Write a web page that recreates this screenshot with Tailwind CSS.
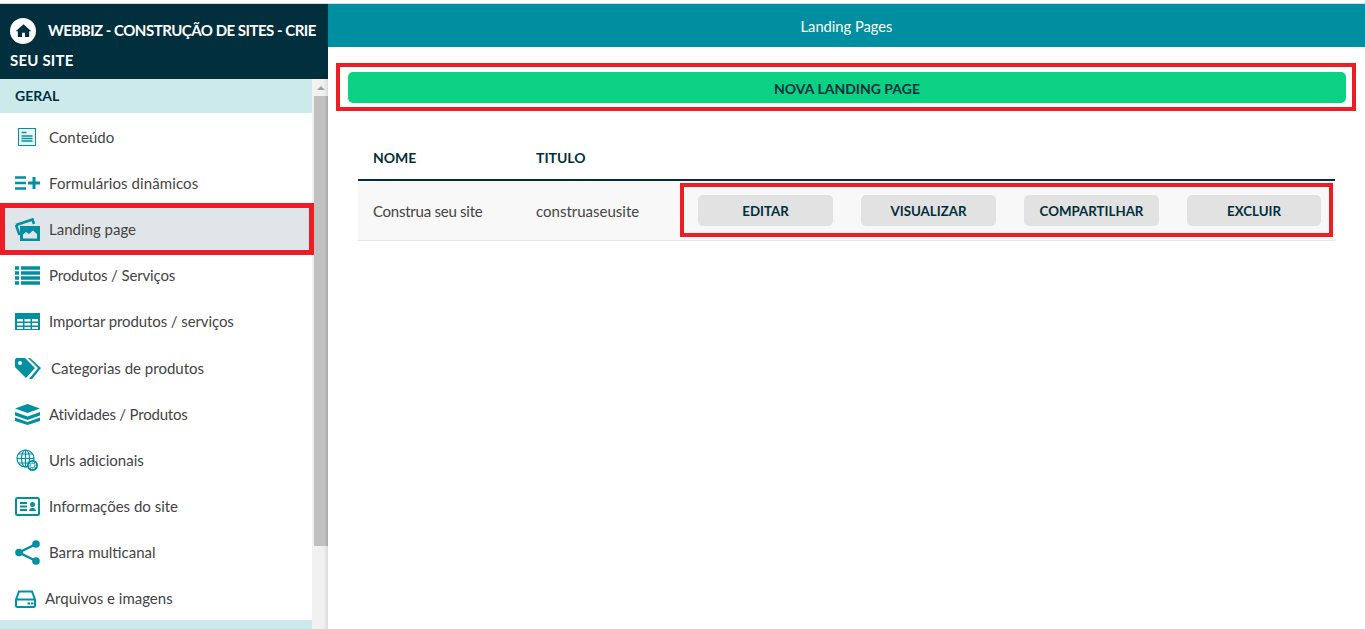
<!DOCTYPE html>
<html lang="en">

<head>
    <meta charset="UTF-8" />
    <meta name="viewport" content="width=device-width, initial-scale=1.0" />
    <script src="https://cdn.jsdelivr.net/npm/@tailwindcss/browser@4"></script>
    <title>Landing Pages</title>
</head>

<body class="h-[629px] overflow-hidden bg-white font-['Lato','Noto_Sans',sans-serif] text-[15px] text-[#444]">
    <div class="h-[4px] bg-white border-b border-[#d9dcde]"></div>
    <div class="flex h-[625px]">
        <aside class="w-[328px] shrink-0 flex flex-col">
            <div class="h-[75px] bg-[#022f3d] text-white font-bold text-[15px] leading-[30px] pl-[10px] pt-[11px]">
                <span class="tracking-[-0.5px]"><span class="inline-flex items-center justify-center w-[26px] h-[26px] rounded-full bg-white align-middle mr-[12px] -mt-[3px]">
                    <svg class="w-[17px] h-[17px] fill-[#022f3d]" viewBox="0 0 24 24"><path d="M12 3 1 13h3v8h6v-6h4v6h6v-8h3z" /></svg>
                </span>WEBBIZ - CONSTRUÇÃO DE SITES - CRIE</span><br><span class="tracking-[0.2px]">SEU SITE</span>
            </div>
            <div class="flex flex-1 min-h-0">
                <nav class="w-[312px] shrink-0 overflow-hidden">
                    <div class="h-[34px] bg-[#cceaec] pl-[15px] pb-[2px] flex items-center font-bold text-[14px] text-[#022f3d]">GERAL</div>
                    <ul class="pt-[1px]">
                        <li class="h-[46px] flex items-center pl-[18px] gap-[13px]">
                            <svg class="w-[18px] h-[18px]" viewBox="0 0 18 18"><rect x="0.5" y="0.5" width="17" height="17" fill="#eef7f8" stroke="#0090a3" /><path d="M3.500 4.500h5M3.500 8h11M3.500 10.500h11M3.500 13h11" stroke="#0090a3" stroke-width="1.300" /></svg>
                            <span>Conteúdo</span>
                        </li>
                        <li class="h-[46px] flex items-center pl-[15px] gap-[9px]">
                            <svg class="w-[25px] h-[14px]" viewBox="0 0 25 14"><path d="M0 1.500h11M0 7h11M0 12.500h11" stroke="#0090a3" stroke-width="2.600" /><path d="M19 1v12M13 7h12" stroke="#0090a3" stroke-width="3" /></svg>
                            <span class="tracking-[0.1px]">Formulários dinâmicos</span>
                        </li>
                        <li class="h-[46px] flex items-center pl-[15px] gap-[9px] bg-[#e0e5e9]">
                            <svg class="w-[25px] h-[23px]" viewBox="0 0 25 23"><path d="M1 7 17.500 1.500 19 6M1 7l3.500 10" fill="none" stroke="#0090a3" stroke-width="2.600" /><rect x="5" y="8" width="20" height="15" fill="#0090a3" /><path d="M8 20.500v-4l3-2.500 3 2 4-3.500 4 3.500v4.500z" fill="#e0e5e9" /></svg>
                            <span>Landing page</span>
                        </li>
                        <li class="h-[46px] flex items-center pl-[15px] gap-[9px]">
                            <svg class="w-[25px] h-[19px]" viewBox="0 0 25 19"><path d="M0 2h4M6 2h19M0 7h4M6 7h19M0 12h4M6 12h19M0 17h4M6 17h19" stroke="#0090a3" stroke-width="3.400" /></svg>
                            <span class="tracking-[-0.15px]">Produtos / Serviços</span>
                        </li>
                        <li class="h-[46px] flex items-center pl-[15px] gap-[9px]">
                            <svg class="w-[25px] h-[17px]" viewBox="0 0 25 17"><rect width="25" height="17" fill="#0090a3" /><path d="M2 6h6v2.500H2zM9.500 6h6v2.500h-6zM17 6h6v2.500h-6zM2 10h6v2.500H2zM9.500 10h6v2.500h-6zM17 10h6v2.500h-6zM2 14h6v2H2zM9.500 14h6v2h-6zM17 14h6v2h-6z" fill="#fff" /></svg>
                            <span class="tracking-[-0.1px]">Importar produtos / serviços</span>
                        </li>
                        <li class="h-[47px] flex items-center pl-[15px] gap-[10px] pt-[1px]">
                            <svg class="w-[26px] h-[21px]" viewBox="0 0 26 21"><path d="M0 1.500 1.500 0H10l10 10-9 10L0 9zM5 3a2 2 0 1 0 0 4 2 2 0 0 0 0-4z" fill="#0090a3" fill-rule="evenodd" /><path d="M13 0h2l11 10-9 11h-3l9-11z" fill="#0090a3" /></svg>
                            <span>Categorias de produtos</span>
                        </li>
                        <li class="h-[46px] flex items-center pl-[15px] gap-[9px]">
                            <svg class="w-[25px] h-[21px]" viewBox="0 0 25 21"><path d="M12.500 0 25 4.500 12.500 9 0 4.500zM0 8l12.500 4.500L25 8v3.500L12.500 16 0 11.500zM0 13.500 12.500 18 25 13.500V17l-12.500 4L0 17z" fill="#0090a3" /></svg>
                            <span class="tracking-[-0.2px]">Atividades / Produtos</span>
                        </li>
                        <li class="h-[46px] flex items-center pl-[16px] gap-[11px]">
                            <svg class="w-[22px] h-[22px]" viewBox="0 0 22 22"><g fill="none" stroke="#0090a3" stroke-width="1.200"><circle cx="9.500" cy="9.500" r="8.500" /><ellipse cx="9.500" cy="9.500" rx="4" ry="8.500" /><path d="M9.500 1v17M1 9.500h17M2.500 5h14M2.500 14h14" /></g><circle cx="16.500" cy="16.500" r="5.500" fill="#0090a3" /><circle cx="16.500" cy="16.500" r="3" fill="none" stroke="#fff" stroke-width="1.400" stroke-dasharray="1.500 0.800" /><circle cx="16.500" cy="16.500" r="1.800" fill="#fff" /></svg>
                            <span>Urls adicionais</span>
                        </li>
                        <li class="h-[46px] flex items-center pl-[15px] gap-[9px]">
                            <svg class="w-[25px] h-[19px]" viewBox="0 0 25 19"><rect x="1" y="1" width="23" height="17" rx="1.500" fill="#fff" stroke="#0090a3" stroke-width="2" /><path d="M5 6h7M5 9.500h7M5 13h7" stroke="#0090a3" stroke-width="1.800" /><circle cx="17.500" cy="7.500" r="2.500" fill="#0090a3" /><path d="M14 14c0-2 2-3 3.500-3s3.500 1 3.500 3z" fill="#0090a3" /></svg>
                            <span>Informações do site</span>
                        </li>
                        <li class="h-[46px] flex items-center pl-[15px] gap-[9px]">
                            <svg class="w-[25px] h-[25px]" viewBox="0 0 25 25"><path d="M21 4 4 12.500 21 21" fill="none" stroke="#0090a3" stroke-width="2.400" /><circle cx="21" cy="4" r="3.800" fill="#0090a3" /><circle cx="4" cy="12.500" r="3.800" fill="#0090a3" /><circle cx="21" cy="21" r="3.800" fill="#0090a3" /></svg>
                            <span>Barra multicanal</span>
                        </li>
                        <li class="h-[45px] flex items-center pl-[15px] gap-[9px] pt-[2px]">
                            <svg class="w-[21px] h-[18px]" viewBox="0 0 21 18"><path d="M1 9.500 4 1.500h13L20 9.500v6a1.500 1.500 0 0 1-1.500 1.500h-16A1.500 1.500 0 0 1 1 15.500zM1 9.500h19" fill="none" stroke="#0090a3" stroke-width="2" /><path d="M12.500 13.500h2.500M16 13.500h2.500" stroke="#0090a3" stroke-width="1.800" /></svg>
                            <span>Arquivos e imagens</span>
                        </li>
                    </ul>
                    <div class="h-[34px] bg-[#cceaec]"></div>
                </nav>
                <div class="w-[16px] shrink-0 bg-[#f1f1f1] flex flex-col pl-[2px] bg-gradient-to-r from-[#f1f1f1] from-70% to-[#dcdcdc]">
                    <div class="h-[17px] flex items-center justify-center">
                        <div class="w-0 h-0 border-x-[4px] border-x-transparent border-b-[4px] border-b-[#a3a3a3]"></div>
                    </div>
                    <div class="h-[450px] bg-gradient-to-r from-[#c1c1c1] from-75% to-[#a8a8a8]"></div>
                </div>
            </div>
        </aside>

        <main class="flex-1 min-w-0">
            <header class="h-[43px] bg-[#008fa1] flex items-center justify-center text-white text-[14.700px] pt-[2px]">Landing Pages</header>
            <div class="mt-[16px] ml-[8px] mr-[9px] border-[4px] border-[#ee1c25] h-[48px] pt-[5px] pr-[6px] pl-[8px]">
                <button class="w-full h-[31px] rounded-[5px] bg-[#0ad184] font-bold text-[14px] text-[#022f3d] pt-[1px]">NOVA LANDING PAGE</button>
            </div>
            <section class="mt-[33px] ml-[30px] mr-[30px]">
                <div class="flex h-[37px] pb-[8px] items-center border-b-[2px] border-[#022f3d] font-bold text-[14px] text-[#022f3d] pl-[15px]">
                    <span class="w-[163px]">NOME</span>
                    <span>TITULO</span>
                </div>
                <div class="flex h-[60px] pb-[2px] items-center bg-[#f8f8f8] border-b border-[#e7e7e7] pl-[15px]">
                    <span class="w-[163px] tracking-[-0.25px] mt-[3px]">Construa seu site</span>
                    <span class="w-[144px] mt-[3px]">construaseusite</span>
                    <div class="flex gap-[28px] items-center border-[4px] border-[#ee1c25] h-[54px] w-[653px] pl-[14px] pt-[1px] font-bold text-[13.300px] text-[#022f3d]">
                        <button class="w-[135px] h-[31px] pt-[3px] rounded-[5px] bg-[#e2e2e2]">EDITAR</button>
                        <button class="w-[135px] h-[31px] pt-[3px] rounded-[5px] bg-[#e2e2e2]">VISUALIZAR</button>
                        <button class="w-[135px] h-[31px] pt-[3px] rounded-[5px] bg-[#e2e2e2]">COMPARTILHAR</button>
                        <button class="w-[134px] h-[31px] pt-[3px] rounded-[5px] bg-[#e2e2e2]">EXCLUIR</button>
                    </div>
                </div>
            </section>
        </main>
    </div>
    <div class="absolute left-0 top-[203px] w-[314px] h-[52px] border-[5px] border-[#ee1c25]"></div>
</body>

</html>
